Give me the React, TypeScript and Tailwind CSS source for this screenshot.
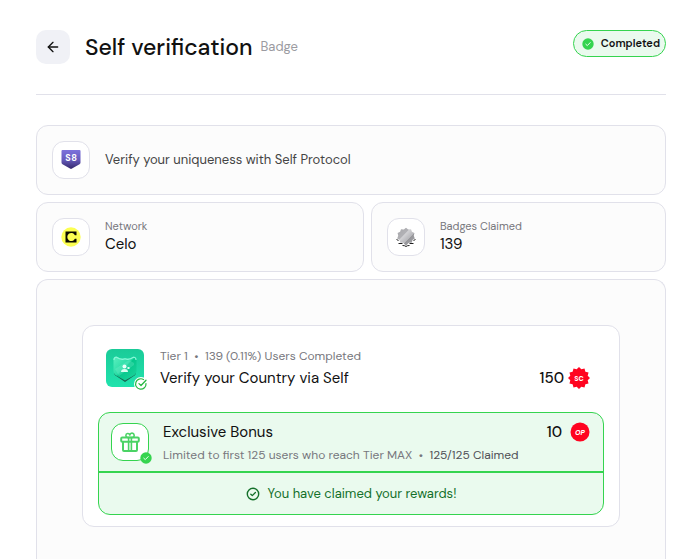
import React from 'react';
import { ArrowLeft } from 'lucide-react';

interface IconTileProps {
  children: React.ReactNode;
  className?: string;
}

function IconTile({ children, className = 'border-[#e1e1ea]' }: IconTileProps) {
  return (
    <div className={`relative flex size-[38px] shrink-0 items-center justify-center rounded-xl border bg-white ${className}`}>
      {children}
    </div>
  );
}

function SolidCheck({ className }: { className: string }) {
  return (
    <svg viewBox="0 0 12 12" className={className} aria-hidden="true">
      <circle cx="6" cy="6" r="5.7" fill="#35d44f" />
      <path d="M3.8 6.2 5.3 7.6 8.2 4.6" fill="none" stroke="#eafff0" strokeWidth="1" strokeLinecap="round" strokeLinejoin="round" />
    </svg>
  );
}

function ShieldLogo() {
  return (
    <svg viewBox="0 0 20 20" className="size-5" aria-hidden="true">
      <defs>
        <linearGradient id="shield" x1="0" y1="0" x2="0" y2="1">
          <stop offset="0" stopColor="#7c72dc" />
          <stop offset="0.5" stopColor="#685cbe" />
          <stop offset="1" stopColor="#35286c" />
        </linearGradient>
      </defs>
      <path d="M1.500 0h17q1 0 1 1v11.500q0 1.200-1 1.800L11 18.600q-1 .6-2 0L1.500 14.300q-1-.6-1-1.800V1q0-1 1-1z" fill="url(#shield)" />
      <text x="7" y="11" textAnchor="middle" fontSize="9" fontWeight="700" fill="#fff">S</text>
      <text x="13" y="11" textAnchor="middle" fontSize="9" fontWeight="700" fill="#fff">8</text>
    </svg>
  );
}

function CeloLogo() {
  return (
    <svg viewBox="0 0 20 20" className="size-5" aria-hidden="true">
      <circle cx="10" cy="10" r="9.7" fill="#fcff52" />
      <path d="M4.500 4.500h11v3.800h-1.600a4 4 0 1 0 0 3.400h1.600v3.800h-11z" fill="#0b0b00" />
    </svg>
  );
}

function SilverBadge() {
  return (
    <svg viewBox="0 0 20 20" className="size-5" aria-hidden="true">
      <defs>
        <linearGradient id="silver" x1="0" y1="0" x2="1" y2="1">
          <stop offset="0" stopColor="#a6a6aa" />
          <stop offset="0.38" stopColor="#b2b2b6" />
          <stop offset="0.4" stopColor="#d2d2d5" />
          <stop offset="0.62" stopColor="#b8b8bc" />
          <stop offset="0.64" stopColor="#96969a" />
          <stop offset="1" stopColor="#a8a8ac" />
        </linearGradient>
      </defs>
      <path d="M.5 12.500l2 1M17.500 13.500l2-1M2.500 16.500h4M13.500 16.500h4M6.500 18.500l2 .2 1.500.8 1.500-.8 2-.2" fill="none" stroke="#222" strokeWidth="1" />
      <path d="M10 .8l2.200 1.700 2.800-.3.9 2.600 2.500 1.300-.6 2.700 1 2.600-2.300 1.600-.8 2.700-2.800.1-2.200 2.200-.7.7-.7-.7-2.200-2.200-2.800-.1-.8-2.700-2.300-1.600 1-2.600-.6-2.700 2.500-1.300.9-2.600 2.800.3z" fill="url(#silver)" />
    </svg>
  );
}

function TierArtwork() {
  return (
    <svg viewBox="0 0 38 38" className="size-[38px]" aria-hidden="true">
      <defs>
        <linearGradient id="tier" x1="0" y1="0" x2="0" y2="1">
          <stop offset="0" stopColor="#1acb98" />
          <stop offset="1" stopColor="#20e3ad" />
        </linearGradient>
        <linearGradient id="crest" x1="0" y1="0" x2="1" y2="1">
          <stop offset="0" stopColor="#5cf0c0" />
          <stop offset="0.45" stopColor="#2bdda6" />
          <stop offset="0.5" stopColor="#05c78b" />
          <stop offset="1" stopColor="#20d49d" />
        </linearGradient>
      </defs>
      <rect width="38" height="38" rx="6" fill="url(#tier)" />
      <path d="M8 12h22v11q0 3-3 4.500L19 33l-8-5.500Q8 26 8 23z" fill="#17604f" />
      <path d="M7.500 10q0-3 3-2.500Q15 10.500 19 9q4 1.500 8.500-1.500 3-.5 3 2.500v12q0 3-3.500 5L19 31.500 11 27q-3.500-2-3.500-5z" fill="url(#crest)" />
      <path d="M8 11q0-3 2.500-2.700Q15 11.300 19 9.800q4 1.500 8.500-1.500Q30 8 30 11" fill="none" stroke="#8df7da" strokeWidth="1.200" />
      <path d="M9 20 23 11l5 3v2L13 27z" fill="#8bf5d6" opacity=".25" />
      <circle cx="18.500" cy="17.500" r="2" fill="#e9fff8" />
      <path d="M15 23q0-3 3.500-3t3.500 3zM21.500 18h2v2h-2z" fill="#d9fff2" />
    </svg>
  );
}

function OutlineCheck({ className, ring = false }: { className: string; ring?: boolean }) {
  return (
    <svg viewBox="0 0 14 14" className={className} fill="none" stroke="currentColor" strokeLinecap="round" strokeLinejoin="round" aria-hidden="true">
      {ring && <circle cx="7" cy="7" r="7" fill="#fff" stroke="none" />}
      {ring ? <path d="M12 6.500A5.200 5.200 0 1 1 9.500 2.500" strokeWidth="1.200" /> : <circle cx="7" cy="7" r="5.700" strokeWidth="1.400" />}
      <path d={ring ? 'M5 6.600 7 8.500 12 3.200' : 'M4.800 7.200 6.300 8.600 9.400 5.500'} strokeWidth="1.300" />
    </svg>
  );
}

function GiftIcon() {
  return (
    <svg viewBox="0 0 20 20" className="size-5" fill="none" stroke="#4bd365" strokeWidth="2" strokeLinejoin="round" aria-hidden="true">
      <rect x="1.200" y="5.500" width="17.600" height="4.200" rx="1" />
      <path d="M3 9.500V18a1 1 0 0 0 1 1h12a1 1 0 0 0 1-1V9.500" />
      <path d="M8.600 5.500V19M11.400 5.500V19" strokeWidth="1.600" />
      <path d="M10 5.500H7.500A2 2 0 1 1 9.800 3a2.200 2.200 0 1 1 2.700 2.500z" strokeWidth="1.600" />
    </svg>
  );
}

// 12-pointed seal, outer radius 11 and inner radius 9
const sealPoints = Array.from({ length: 24 }, (_, i) => {
  const r = i % 2 === 0 ? 11 : 9;
  const a = (i * Math.PI) / 12 - Math.PI / 2;
  return `${(11 + r * Math.cos(a)).toFixed(2)},${(11 + r * Math.sin(a)).toFixed(2)}`;
}).join(' ');

function ScToken() {
  return (
    <svg viewBox="0 0 22 22" className="size-[22px]" aria-hidden="true">
      <polygon points={sealPoints} fill="#ff0420" />
      <text x="11" y="13.500" textAnchor="middle" fontSize="7" fontWeight="800" fill="#fff">SC</text>
    </svg>
  );
}

function OpToken() {
  return (
    <svg viewBox="0 0 20 20" className="size-5" aria-hidden="true">
      <circle cx="10" cy="10" r="9.500" fill="#ff0420" />
      <text x="10" y="12.500" textAnchor="middle" fontSize="7" fontWeight="800" fontStyle="italic" fill="#fff">OP</text>
    </svg>
  );
}

export default function App() {
  return (
    <div className="flex min-h-screen flex-col bg-white pl-9 pr-[18px] pt-[30px] font-['DM_Sans','Inter',sans-serif] text-[#111]">
      <header className="flex items-start justify-between border-b border-[#e1e1ea] pb-[30px]">
        <div className="flex items-center">
          <button type="button" aria-label="Back" className="flex size-[34px] items-center justify-center rounded-[10px] bg-[#f0f1f6]">
            <ArrowLeft className="size-4" strokeWidth={2} />
          </button>
          <h1 className="ml-[15px] text-[23px] leading-8 font-medium">Self verification</h1>
          <span className="ml-2 text-[13px] leading-5 text-[#9b9ba1]">Badge</span>
        </div>
        <div className="flex h-[27px] items-center gap-[7px] rounded-full border border-[#35d44f] bg-[#eafaee] pr-[5px] pl-2 text-[11px] font-semibold">
          <SolidCheck className="size-3" />
          Completed
        </div>
      </header>

      <main className="flex flex-1 flex-col gap-[7px] pt-[30px]">
        <section className="flex h-[70px] items-center gap-[15px] rounded-xl border border-[#e1e1ea] bg-[#fcfcfc] px-[15px]">
          <IconTile>
            <ShieldLogo />
          </IconTile>
          <p className="text-[13px] leading-5 text-[#444]">Verify your uniqueness with Self Protocol</p>
        </section>

        <div className="grid grid-cols-[10fr_9fr] gap-[7px]">
          <section className="flex h-[70px] items-center gap-[15px] rounded-xl border border-[#e1e1ea] bg-[#fcfcfc] px-[15px]">
            <IconTile>
              <CeloLogo />
            </IconTile>
            <div className="pb-[3px]">
              <p className="text-[11px] leading-4 text-[#77777d]">Network</p>
              <p className="text-[15px] leading-5">Celo</p>
            </div>
          </section>
          <section className="flex h-[70px] items-center gap-[15px] rounded-xl border border-[#e1e1ea] bg-[#fcfcfc] px-[15px]">
            <IconTile>
              <SilverBadge />
            </IconTile>
            <div className="pb-[3px]">
              <p className="text-[11px] leading-4 text-[#77777d]">Badges Claimed</p>
              <p className="text-[15px] leading-5">139</p>
            </div>
          </section>
        </div>

        <section className="flex-1 rounded-t-xl border border-b-0 border-[#e1e1ea] bg-[#fcfcfc] px-[45px] pt-[45px] pb-8">
          <div className="rounded-xl border border-[#e1e1ea] bg-white px-[15px] pt-5 pb-[11px]">
            <div className="flex items-center px-2">
              <div className="relative shrink-0">
                <TierArtwork />
                <OutlineCheck ring className="absolute -right-1 -bottom-1 size-[14px] text-[#28b842]" />
              </div>
              <div className="ml-4 flex-1">
                <p className="text-xs leading-5 text-[#77777d]">Tier 1&nbsp; •&nbsp; 139 (0.11%) Users Completed</p>
                <p className="text-[15px] leading-6">Verify your Country via Self</p>
              </div>
              <div className="mt-5 mr-[6px] flex items-center gap-1 text-[15px] leading-6 font-medium">
                150
                <ScToken />
              </div>
            </div>

            <div className="mt-[22px] rounded-xl border border-[#35d44f] bg-[#eafaee]">
              <div className="flex h-[60px] border-b-2 border-[#35d44f] px-3 pt-[10px]">
                <IconTile className="border-[#35d44f]">
                  <GiftIcon />
                  <SolidCheck className="absolute -right-1 -bottom-1 size-3" />
                </IconTile>
                <div className="-mt-px ml-[14px] flex-1">
                  <p className="text-[15px] leading-5">Exclusive Bonus</p>
                  <p className="mt-[3px] text-xs leading-5 text-[#77777d]">
                    Limited to first 125 users who reach Tier MAX&nbsp; •&nbsp; <span className="text-[#505056]">125/125 Claimed</span>
                  </p>
                </div>
                <div className="-mt-px flex h-5 items-center gap-2 pr-px text-[15px] font-medium">
                  10
                  <OpToken />
                </div>
              </div>
              <p className="flex h-[41px] items-center justify-center gap-2 text-[13px] text-[#14702a]">
                <OutlineCheck className="size-[14px]" />
                You have claimed your rewards!
              </p>
            </div>
          </div>
        </section>
      </main>
    </div>
  );
}
